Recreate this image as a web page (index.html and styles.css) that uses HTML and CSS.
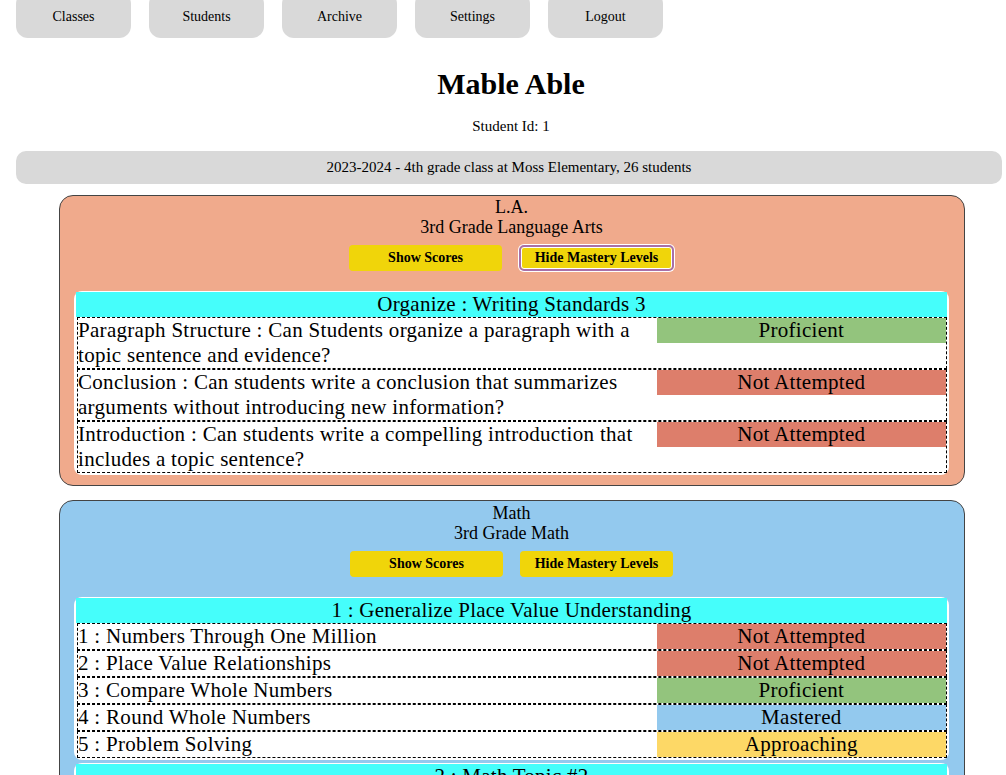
FILE: index.html
```html
<!DOCTYPE html>
<html>
<head>
<meta charset="utf-8">
<title>Mable Able</title>
<link rel="stylesheet" href="styles.css">
</head>
<body>
<nav class="nav">
  <a class="nav-btn">Classes</a>
  <a class="nav-btn">Students</a>
  <a class="nav-btn">Archive</a>
  <a class="nav-btn">Settings</a>
  <a class="nav-btn">Logout</a>
</nav>
<main class="main">
  <h1 class="title">Mable Able</h1>
  <div class="student-id">Student Id: 1</div>
  <div class="band">2023-2024 - 4th grade class at Moss Elementary, 26 students</div>

  <section class="card card-la">
    <div class="card-name">L.A.</div>
    <div class="card-name">3rd Grade Language Arts</div>
    <div class="btns">
      <button class="btn">Show Scores</button>
      <button class="btn btn-focus">Hide Mastery Levels</button>
    </div>
    <div class="group">
      <div class="group-head">Organize : Writing Standards 3</div>
      <div class="row">
        <div class="row-text">Paragraph Structure : Can Students organize a paragraph with a topic sentence and evidence?</div>
        <div class="status"><span class="st st-prof">Proficient</span></div>
      </div>
      <div class="row">
        <div class="row-text">Conclusion : Can students write a conclusion that summarizes arguments without introducing new information?</div>
        <div class="status"><span class="st st-not">Not Attempted</span></div>
      </div>
      <div class="row">
        <div class="row-text">Introduction : Can students write a compelling introduction that includes a topic sentence?</div>
        <div class="status"><span class="st st-not">Not Attempted</span></div>
      </div>
    </div>
  </section>

  <section class="card card-math">
    <div class="card-name">Math</div>
    <div class="card-name">3rd Grade Math</div>
    <div class="btns">
      <button class="btn">Show Scores</button>
      <button class="btn">Hide Mastery Levels</button>
    </div>
    <div class="group">
      <div class="group-head">1 : Generalize Place Value Understanding</div>
      <div class="row">
        <div class="row-text">1 : Numbers Through One Million</div>
        <div class="status"><span class="st st-not">Not Attempted</span></div>
      </div>
      <div class="row">
        <div class="row-text">2 : Place Value Relationships</div>
        <div class="status"><span class="st st-not">Not Attempted</span></div>
      </div>
      <div class="row">
        <div class="row-text">3 : Compare Whole Numbers</div>
        <div class="status"><span class="st st-prof">Proficient</span></div>
      </div>
      <div class="row">
        <div class="row-text">4 : Round Whole Numbers</div>
        <div class="status"><span class="st st-mast">Mastered</span></div>
      </div>
      <div class="row">
        <div class="row-text">5 : Problem Solving</div>
        <div class="status"><span class="st st-appr">Approaching</span></div>
      </div>
    </div>
    <div class="group">
      <div class="group-head">2 : Math Topic #2</div>
      <div class="row">
        <div class="row-text">1 : Topic Item</div>
        <div class="status"><span class="st st-not">Not Attempted</span></div>
      </div>
    </div>
  </section>
</main>
</body>
</html>
```

FILE: styles.css
```css
* { box-sizing: border-box; }
html, body { margin: 0; padding: 0; background: #fff; }
body {
  font-family: "Liberation Serif", "Times New Roman", serif;
  color: #000;
  overflow: hidden;
  height: 775px;
}
.nav {
  display: flex;
  gap: 18px;
  padding-left: 16px;
  margin-top: -8px;
}
.nav-btn {
  display: flex;
  align-items: center;
  justify-content: center;
  width: 115px;
  height: 46px;
  padding-top: 3px;
  background: #d9d9d9;
  border-radius: 12px;
  font-size: 14px;
  color: #000;
}
.main {
  padding-left: 16px;
  padding-bottom: 40px;
}
.title {
  margin: 28px 0 0;
  text-align: center;
  font-size: 30px;
  line-height: 36px;
  font-weight: bold;
}
.student-id {
  margin-top: 16px;
  text-align: center;
  font-size: 15px;
  line-height: 17px;
}
.band {
  margin: 16px 4px 0 0;
  height: 33px;
  display: flex;
  align-items: center;
  justify-content: center;
  background: #d9d9d9;
  border-radius: 10px;
  font-size: 15px;
}
.card {
  margin: 11px 41px 0 43px;
  border: 1px solid #444;
  border-radius: 14px;
  padding: 1px 15px 10px 14px;
}
.card + .card { margin-top: 14px; }
.card-la { background: #f0aa8c; }
.card-math { background: #93c9ee; padding-top: 2px; }
.card-name {
  text-align: center;
  font-size: 18px;
  line-height: 20px;
}
.btns {
  display: flex;
  justify-content: center;
  gap: 17px;
  margin-top: 8px;
  margin-bottom: 20px;
}
.btn {
  width: 153px;
  height: 26px;
  border: none;
  border-radius: 4px;
  background: #f0d50a;
  font-family: "Liberation Serif", "Times New Roman", serif;
  font-weight: bold;
  font-size: 14px;
  color: #000;
  padding: 0;
}
.btn-focus {
  width: 155px;
  border: 2px solid #a870a8;
  box-shadow: 0 0 0 1px #fff, inset 0 0 0 1px #fff;
  border-radius: 5px;
}
.group {
  background: #fff;
  border-radius: 8px;
  padding: 1px 2px 2px 2px;
}
.group + .group { margin-top: 3px; }
.group-head {
  background: #45fefb;
  text-align: center;
  font-size: 21px;
  line-height: 25px;
  letter-spacing: 0.25px;
}
.row {
  display: grid;
  grid-template-columns: 2fr 1fr;
  border: 1px dashed #000;
  margin: 0 0 0 1px;
  font-size: 21px;
  line-height: 25px;
  letter-spacing: 0.3px;
}
.status { align-self: start; }
.st {
  display: block;
  text-align: center;
  height: 25px;
}
.st-prof { background: #93c47d; }
.st-not { background: #dd7e6b; }
.st-mast { background: #93c9ee; }
.st-appr { background: #fdd866; }
```
